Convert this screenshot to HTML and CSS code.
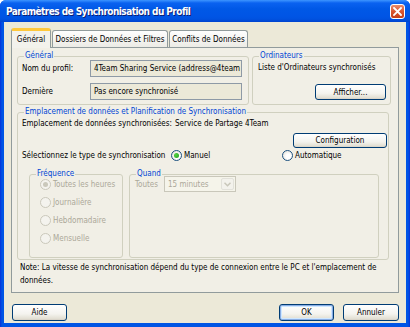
FILE: index.html
```html
<!DOCTYPE html>
<html lang="fr">
<head>
<meta charset="utf-8">
<title>Paramètres de Synchronisation du Profil</title>
<link rel="stylesheet" href="styles.css">
</head>
<body>
<div class="window">
  <div class="titlebar">
    <span class="title">Paramètres de Synchronisation du Profil</span>
    <span class="close"><svg width="9" height="9" viewBox="0 0 9 9"><path d="M1 1L8 8M8 1L1 8" stroke="#fff" stroke-width="1.8" stroke-linecap="square"/></svg></span>
  </div>
  <div class="client">
    <div class="tabs">
      <div class="tab active">Général</div>
      <div class="tab tab-dossiers">Dossiers de Données et Filtres</div>
      <div class="tab tab-conflits">Conflits de Données</div>
    </div>
    <div class="panel">
      <div class="row1">
        <div class="group g-general">
          <span class="legend">Général</span>
          <div class="field"><span class="flabel">Nom du profil:</span><span class="input">4Team Sharing Service (address@4team</span></div>
          <div class="field"><span class="flabel">Dernière</span><span class="input">Pas encore synchronisé</span></div>
        </div>
        <div class="group g-ord">
          <span class="legend">Ordinateurs</span>
          <div class="ord-text">Liste d'Ordinateurs synchronisés</div>
          <div class="right"><button class="btn btn-afficher">Afficher...</button></div>
        </div>
      </div>
      <div class="group g-sync">
        <span class="legend">Emplacement de données et Planification de Synchronisation</span>
        <div class="loc"><span class="loc-label">Emplacement de données synchronisées:</span><span>Service de Partage 4Team</span></div>
        <div class="right"><button class="btn btn-config">Configuration</button></div>
        <div class="type-row">
          <span class="type-label">Sélectionnez le type de synchronisation</span>
          <span class="radio-item r-manuel"><span class="radio checked"></span>Manuel</span>
          <span class="radio-item r-auto"><span class="radio"></span>Automatique</span>
        </div>
        <div class="sched">
          <div class="group g-freq">
            <span class="legend">Fréquence</span>
            <div class="radio-item dis"><span class="radio checked"></span>Toutes les heures</div>
            <div class="radio-item dis"><span class="radio"></span>Journalière</div>
            <div class="radio-item dis"><span class="radio"></span>Hebdomadaire</div>
            <div class="radio-item dis"><span class="radio"></span>Mensuelle</div>
          </div>
          <div class="group g-quand">
            <span class="legend">Quand</span>
            <div class="quand-row">
              <span class="dis-text">Toutes</span>
              <span class="select"><span class="select-val">15 minutes</span><span class="select-btn"><svg width="7" height="5" viewBox="0 0 7 5"><path d="M0.5 0.8L3.5 3.8L6.5 0.8" fill="none" stroke="#c9c7ba" stroke-width="1.5"/></svg></span></span>
            </div>
          </div>
        </div>
      </div>
      <p class="note">Note: La vitesse de synchronisation dépend du type de connexion entre le PC et l'emplacement de données.</p>
    </div>
    <div class="buttons">
      <button class="btn btn-aide">Aide</button>
      <span class="spacer"></span>
      <button class="btn btn-ok">OK</button>
      <button class="btn btn-annuler">Annuler</button>
    </div>
  </div>
</div>
</body>
</html>
```
FILE: styles.css
```css
* { box-sizing: border-box; }
html, body { margin: 0; padding: 0; }
body {
  width: 410px;
  height: 327px;
  overflow: hidden;
  background: #ffffff;
  font-family: "DejaVu Sans Condensed", "Liberation Sans", sans-serif;
  font-size: 8px;
  color: #000;
}
.window {
  width: 410px;
  height: 327px;
  display: flex;
  flex-direction: column;
  background: linear-gradient(90deg, #0831d9 0, #0055e5 2px, #0055e5 408px, #0831d9 410px);
  border-radius: 6px 6px 0 0;
  overflow: hidden;
}
.titlebar {
  height: 22px;
  flex: none;
  display: flex;
  align-items: center;
  padding: 0 5px 0 6px;
  background: linear-gradient(180deg, #3d95ff 0, #0a62f0 3px, #0058e6 9px, #0055e5 16px, #0052e0 19px, #0043cf 22px);
}
.title {
  flex: 1;
  color: #fff;
  font-weight: bold;
  font-size: 10px;
  letter-spacing: -0.55px;
  text-shadow: 1px 1px 0 #0a1e74;
  padding-top: 1px;
}
.close {
  width: 15px;
  height: 15px;
  display: flex;
  align-items: center;
  justify-content: center;
  border: 1px solid #fff;
  border-radius: 3px;
  background: linear-gradient(180deg, #e98c6c 0, #d9562f 50%, #c43e18 100%);
}
.client {
  flex: 1;
  margin: 0 4px 4px;
  background: #ece9d8;
  padding: 6px 7px 0;
  display: flex;
  flex-direction: column;
}
.tabs {
  display: flex;
  height: 19px;
  align-items: flex-end;
  gap: 1px;
  position: relative;
  z-index: 1;
}
.tab {
  height: 17px;
  border: 1px solid #919b9c;
  border-bottom: none;
  border-radius: 3px 3px 0 0;
  background: linear-gradient(180deg, #fefefe, #ecebe5);
  padding: 0 4px;
  display: flex;
  align-items: center;
  justify-content: center;
  white-space: nowrap;
}
.tab.active {
  height: 20px;
  margin-bottom: -1px;
  width: 40px;
  background: #f3f2ec;
  border-top: 3px solid #ffc83c;
  padding-bottom: 1px;
}
.tab-dossiers { width: 116px; }
.tab-conflits { width: 79px; }
.panel {
  height: 246px;
  border: 1px solid #919b9c;
  background: #f1efe6;
  padding: 8px 0 0 5px;
  display: flex;
  flex-direction: column;
}
.group {
  position: relative;
  border: 1px solid #d0d0bf;
  border-radius: 3px;
}
.legend {
  position: absolute;
  top: -6px;
  left: 6px;
  padding: 0 1px;
  line-height: 10px;
  color: #0046d5;
  background: #f1efe6;
  white-space: nowrap;
}
.row1 {
  display: flex;
  gap: 3px;
}
.g-general {
  width: 232px;
  height: 49px;
  padding: 3px 0 0 4px;
  display: flex;
  flex-direction: column;
  gap: 6px;
}
.field {
  display: flex;
  align-items: center;
}
.flabel { width: 68px; }
.input {
  width: 152px;
  height: 17px;
  border: 1px solid #8e9aa6;
  background: #ece9d8;
  padding: 0 3px;
  line-height: 15px;
  white-space: nowrap;
  overflow: hidden;
}
.g-ord {
  width: 139px;
  height: 49px;
  padding: 5px 4px 0 5px;
}
.ord-text { line-height: 12px; }
.right { display: flex; justify-content: flex-end; }
.btn {
  font: inherit;
  color: #000;
  border: 1px solid #003c74;
  border-radius: 3px;
  background: linear-gradient(180deg, #ffffff 0, #f4f3ee 60%, #e3e0d4 90%, #d6d0c5 100%);
  padding: 0;
  height: 16px;
}
.btn-afficher { width: 71px; margin-top: 10px; }
.g-sync {
  width: 372px;
  height: 148px;
  margin-top: 7px;
  padding: 5px 1px 0 4px;
}
.loc { line-height: 12px; display: flex; }
.loc-label { width: 153px; }
.btn-config { width: 94px; height: 15px; margin-top: 3px; }
.type-row {
  display: flex;
  align-items: center;
  margin-top: 1px;
  height: 12px;
}
.type-label { width: 149px; }
.radio-item {
  display: flex;
  align-items: center;
  gap: 2px;
  white-space: nowrap;
}
.r-manuel { width: 111px; }
.radio {
  width: 11px;
  height: 11px;
  border-radius: 50%;
  border: 1px solid #1c5180;
  background: radial-gradient(circle at 60% 60%, #ffffff 30%, #dcd8ce 100%);
  display: inline-flex;
  align-items: center;
  justify-content: center;
  flex: none;
}
.radio.checked::after {
  content: "";
  width: 5px;
  height: 5px;
  border-radius: 50%;
  background: radial-gradient(circle at 35% 35%, #55d140, #21a121);
}
.sched {
  display: flex;
  gap: 6px;
  margin: 13px 0 0 7px;
}
.g-freq {
  width: 94px;
  height: 84px;
  padding: 4px 0 0 10px;
  display: flex;
  flex-direction: column;
  gap: 7px;
}
.dis { color: #aca899; }
.dis .radio {
  border-color: #cac8bb;
  background: #f4f3ee;
}
.dis .radio.checked::after { background: #cac8bb; }
.g-quand {
  width: 250px;
  height: 84px;
  padding: 1px 0 0 5px;
}
.quand-row {
  display: flex;
  align-items: center;
}
.dis-text { color: #aca899; width: 29px; }
.select {
  width: 72px;
  height: 16px;
  border: 1px solid #c9c7ba;
  background: #f5f4ea;
  display: flex;
  align-items: center;
  color: #aca899;
  padding: 0 1px 0 3px;
}
.select-val { flex: 1; }
.select-btn {
  width: 13px;
  height: 12px;
  background: #f3f2ec;
  border: 1px solid #e2e1da;
  border-radius: 2px;
  display: flex;
  align-items: center;
  justify-content: center;
}
.note {
  margin: 1px 0 0 3px;
  width: 370px;
  line-height: 13px;
}
.buttons {
  display: flex;
  margin-top: 11px;
  gap: 9px;
}
.spacer { flex: 1; }
.btn-aide { width: 55px; height: 17px; margin-left: 1px; }
.btn-ok {
  width: 55px;
  height: 17px;
  box-shadow: inset 0 0 0 1px #89ade4, inset 0 0 0 2px #cee7ff;
}
.btn-annuler { width: 56px; height: 17px; }
```
